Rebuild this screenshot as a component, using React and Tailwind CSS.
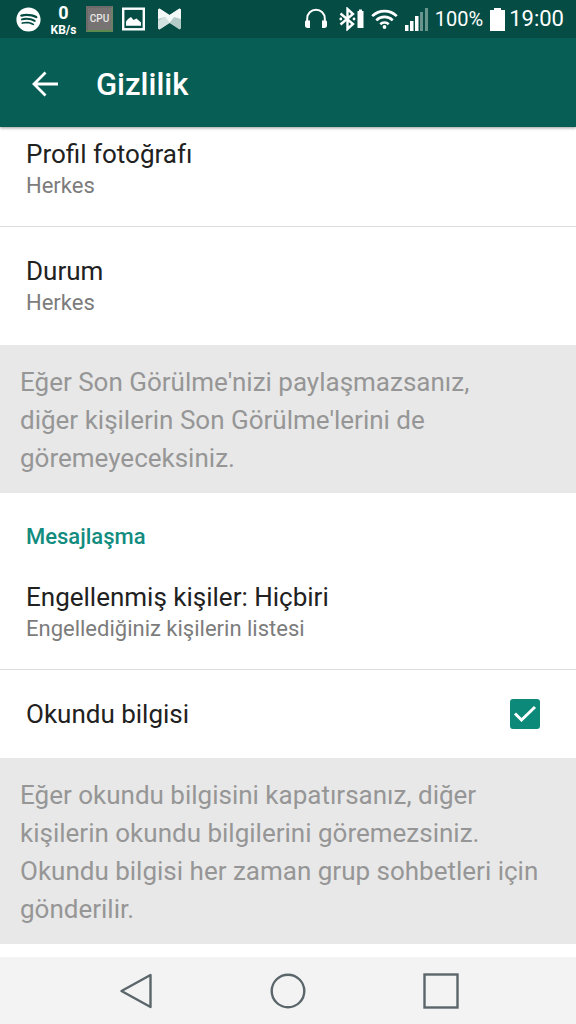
import React, { useState } from "react";
import { FaSpotify } from "react-icons/fa";

const CpuIcon = () => (
  <span className="flex h-[26px] w-[27px] items-center justify-center border-2 border-t-[#6d6a6a] border-r-[#6f7f68] border-b-[#5c8a4c] border-l-[#6d6a6a] bg-[#777373] text-[10px] leading-none font-medium text-[#e8e8e8]">
    CPU
  </span>
);

const PictureIcon = () => (
  <svg width="23" height="24" viewBox="0 0 23 24">
    <rect x="1.2" y="1.7" width="20.6" height="20.6" fill="none" stroke="#fff" strokeWidth="2.4" />
    <path d="M4 18.8v-4.3l2-2.5 3-2 2.5 3 3-1.5 4.5 4v3.3z" fill="#fff" />
  </svg>
);

const RibbonIcon = () => (
  <svg width="23" height="22" viewBox="0 0 23 22">
    <path d="M0 1.5 1.5.5l10 6.5 10-6.5L23 1.500v19l-1.500 1-10-6.500-10 6.500-1.500-1z" fill="#b4cbc8" />
    <path d="M0 1.500 1.500.5l10 6.500 10-6.500L23 1.500V11l-7-2-4.500 6L7 9l-7 2z" fill="#f4f8f7" />
    <path d="M0 13l7-4 4.500 6-10 6.500-1.500-1z" fill="#d3e2e0" />
  </svg>
);

const HeadphonesIcon = () => (
  <svg width="24" height="22" viewBox="0 0 24 22">
    <path d="M3.2 16v-5.500a8.800 8.800 0 0 1 17.600 0V16" fill="none" stroke="#fff" strokeWidth="2" />
    <path d="M1 14c0-1 .6-1.500 1.500-1.500H6V20H3.500C2 20 1 19 1 17.500zM23 14c0-1-.6-1.500-1.500-1.500H18V20h2.500c1.500 0 2.500-1 2.500-2.500z" fill="#fff" />
  </svg>
);

const BluetoothIcon = () => (
  <svg width="25" height="24" viewBox="0 0 25 24">
    <path d="M1.500 6.500 14 17l-5.500 5V2L14 7 1.500 17.500" fill="none" stroke="#fff" strokeWidth="2.400" />
    <circle cx="1.8" cy="12" r="1.400" fill="#fff" />
    <circle cx="15" cy="12" r="1.400" fill="#fff" />
    <path d="M18.500 4H20V2.500h3V4h1.500v17h-6z" fill="#fff" />
  </svg>
);

const WifiIcon = () => (
  <svg width="27" height="20" viewBox="0 0 27 20">
    <g fill="none" stroke="#fff" strokeWidth="2.600">
      <path d="M1.200 7.200a17.400 17.400 0 0 1 24.600 0" />
      <path d="M5.300 11.300a11.600 11.600 0 0 1 16.400 0" />
      <path d="M9.300 15.200a6 6 0 0 1 8.400 0" />
    </g>
    <circle cx="13.500" cy="18" r="1.900" fill="#fff" />
  </svg>
);

const SignalIcon = () => (
  <svg width="23" height="23" viewBox="0 0 23 23" fill="#fff">
    <rect x="0" y="17" width="3.500" height="6" />
    <rect x="5" y="13" width="3.500" height="10" />
    <rect x="10" y="8" width="3.500" height="15" />
    <rect x="15" y="4" width="3" height="19" opacity="0.4" />
    <rect x="20" y="0" width="3" height="23" opacity="0.4" />
  </svg>
);

const BatteryIcon = () => (
  <svg width="15" height="23" viewBox="0 0 15 23">
    <path d="M0 2h4V0h7v2h4v21H0z" fill="#fff" />
  </svg>
);

const StatusBar = () => (
  <div className="flex h-[38px] items-center justify-between bg-[#054d44] pr-3 pl-4 text-white">
    <div className="flex items-center gap-[9px]">
      <FaSpotify size={25} />
      <div className="flex w-[27px] flex-col items-center font-bold">
        <span className="text-[18px] leading-[21px]">0</span>
        <span className="text-[12px] leading-[14px]">KB/s</span>
      </div>
      <CpuIcon />
      <PictureIcon />
      <span className="pl-1">
        <RibbonIcon />
      </span>
    </div>
    <div className="flex items-center gap-[7px]">
      <span className="pr-1">
        <HeadphonesIcon />
      </span>
      <BluetoothIcon />
      <WifiIcon />
      <SignalIcon />
      <span className="text-[20px] leading-6">100%</span>
      <div className="flex items-center gap-1">
        <BatteryIcon />
        <span className="text-[22px] leading-6">19:00</span>
      </div>
    </div>
  </div>
);

const SettingRow = ({ title, value, last }) => (
  <button
    type="button"
    className={`block w-full px-[26px] pt-7 text-left ${last ? "pb-[26px]" : "border-b border-[#dcdcdc] pb-6"}`}
  >
    <span className="block text-[26px] leading-8 text-[#212121]">{title}</span>
    <span className="block text-[22px] leading-8 text-[#7c7c7c]">{value}</span>
  </button>
);

const Note = ({ children }) => (
  <p className="bg-[#e8e8e8] px-5 pt-[18px] pb-4 text-[26px] leading-[38px] text-[#969696]">
    {children}
  </p>
);

const App = () => {
  const [readReceipts, setReadReceipts] = useState(true);

  return (
    <div className="flex min-h-screen flex-col bg-white font-['Roboto',sans-serif]">
      <header className="relative z-10 shadow-[0_1px_3px_rgba(0,0,0,0.4)]">
        <StatusBar />
        <div className="flex h-[89px] items-center gap-9 bg-[#075e54] px-[30px] pt-1 text-white">
          <button type="button" aria-label="Geri">
            <svg width="30" height="28" viewBox="0 0 30 28" fill="none" stroke="#fff" strokeWidth="2.800">
              <path d="M28 13H4M15.500 1.500 4 13l11.500 11.500" />
            </svg>
          </button>
          <h1 className="text-[31px] leading-9 font-medium">Gizlilik</h1>
        </div>
      </header>

      {/* List is scrolled slightly under the header */}
      <main className="-mt-[17px] flex-1">
        <SettingRow title="Profil fotoğrafı" value="Herkes" />
        <SettingRow title="Durum" value="Herkes" last />
        <Note>
          Eğer Son Görülme'nizi paylaşmazsanız,
          <br />
          diğer kişilerin Son Görülme'lerini de göremeyeceksiniz.
        </Note>

        <h2 className="px-[26px] pt-7 text-[22px] leading-8 font-medium text-[#128c7e]">
          Mesajlaşma
        </h2>
        <SettingRow
          title="Engellenmiş kişiler: Hiçbiri"
          value="Engellediğiniz kişilerin listesi"
        />
        <label className="flex items-center justify-between py-7 pr-9 pl-[26px] text-[26px] leading-8 text-[#212121]">
          Okundu bilgisi
          <span className="relative h-[30px] w-[30px]">
            <input
              type="checkbox"
              checked={readReceipts}
              onChange={(e) => setReadReceipts(e.target.checked)}
              className="block h-[30px] w-[30px] appearance-none rounded-[3px] border-2 border-[#0d897a] checked:bg-[#0d897a]"
            />
            {readReceipts && (
              <svg
                className="pointer-events-none absolute inset-0"
                width="30"
                height="30"
                viewBox="0 0 30 30"
                fill="none"
                stroke="#fff"
                strokeWidth="3"
              >
                <path d="M5 14.500 11.500 21 25 8" />
              </svg>
            )}
          </span>
        </label>
        <Note>
          Eğer okundu bilgisini kapatırsanız, diğer kişilerin okundu bilgilerini
          göremezsiniz. Okundu bilgisi her zaman grup sohbetleri için
          gönderilir.
        </Note>
      </main>

      <nav className="mt-[13px] flex h-[67px] items-center justify-center gap-[117px] bg-[#f3f3f3]">
        <button type="button" aria-label="Geri dön">
          <svg width="36" height="36" viewBox="0 0 36 36" fill="none" stroke="#5b666b" strokeWidth="2.400">
            <path d="M33.500 2v32L4.500 18z" strokeLinejoin="round" />
          </svg>
        </button>
        <button type="button" aria-label="Ana ekran">
          <svg width="36" height="36" viewBox="0 0 36 36" fill="none" stroke="#5b666b" strokeWidth="2.400">
            <circle cx="18" cy="18" r="16.300" />
          </svg>
        </button>
        <button type="button" aria-label="Son uygulamalar">
          <svg width="36" height="36" viewBox="0 0 36 36" fill="none" stroke="#5b666b" strokeWidth="2.400">
            <rect x="1.500" y="1.500" width="33" height="33" />
          </svg>
        </button>
      </nav>
    </div>
  );
};

export default App;
